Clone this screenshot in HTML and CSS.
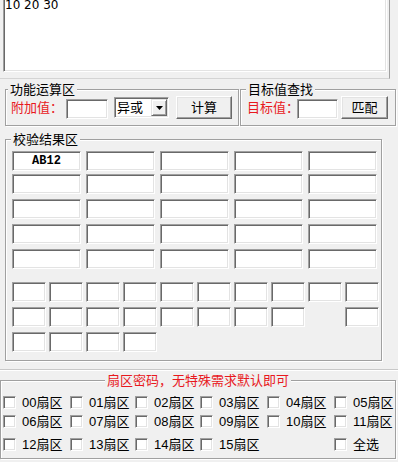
FILE: index.html
```html
<!DOCTYPE html>
<html lang="zh-CN">
<head>
<meta charset="utf-8">
<title>校验工具</title>
<link rel="stylesheet" href="styles.css">
</head>
<body>
<div class="top">
  <div class="memo"><span class="memo-text">10 20 30</span></div>
</div>

<div class="groups">
  <div class="group g1">
    <span class="legend">功能运算区</span>
    <div class="row">
      <span class="lbl lbl1">附加值：</span>
      <span class="edit e1"></span>
      <div class="combo">
        <span class="ctext">异或</span>
        <span class="cbtn"><svg width="7" height="4" viewBox="0 0 7 4"><path d="M0 0H7L3.5 4Z" fill="#000"/></svg></span>
      </div>
      <div class="btn b1">计算</div>
    </div>
  </div>
  <div class="group g2">
    <span class="legend">目标值查找</span>
    <div class="row">
      <span class="lbl lbl2">目标值：</span>
      <span class="edit e2"></span>
      <div class="btn b2">匹配</div>
    </div>
  </div>
</div>

<div class="group results">
  <span class="legend">校验结果区</span>
  <div class="big">
    <div class="edit cell"><span class="ab">AB12</span></div>
    <div class="edit cell"></div><div class="edit cell"></div><div class="edit cell"></div><div class="edit cell"></div>
    <div class="edit cell"></div><div class="edit cell"></div><div class="edit cell"></div><div class="edit cell"></div><div class="edit cell"></div>
    <div class="edit cell"></div><div class="edit cell"></div><div class="edit cell"></div><div class="edit cell"></div><div class="edit cell"></div>
    <div class="edit cell"></div><div class="edit cell"></div><div class="edit cell"></div><div class="edit cell"></div><div class="edit cell"></div>
    <div class="edit cell"></div><div class="edit cell"></div><div class="edit cell"></div><div class="edit cell"></div><div class="edit cell"></div>
  </div>
  <div class="small">
    <div class="edit"></div><div class="edit"></div><div class="edit"></div><div class="edit"></div><div class="edit"></div>
    <div class="edit"></div><div class="edit"></div><div class="edit"></div><div class="edit"></div><div class="edit"></div>
    <div class="edit"></div><div class="edit"></div><div class="edit"></div><div class="edit"></div><div class="edit"></div>
    <div class="edit"></div><div class="edit"></div><div class="edit"></div><div class="spacer"></div><div class="edit"></div>
    <div class="edit"></div><div class="edit"></div><div class="edit"></div><div class="edit"></div>
  </div>
</div>

<div class="sep"></div>

<div class="group sector">
  <span class="legend red center">扇区密码，无特殊需求默认即可</span>
  <div class="chks">
    <label class="chk"><span class="box"></span><span>00扇区</span></label>
    <label class="chk"><span class="box"></span><span>01扇区</span></label>
    <label class="chk"><span class="box"></span><span>02扇区</span></label>
    <label class="chk"><span class="box"></span><span>03扇区</span></label>
    <label class="chk"><span class="box"></span><span>04扇区</span></label>
    <label class="chk"><span class="box"></span><span>05扇区</span></label>
    <label class="chk"><span class="box"></span><span>06扇区</span></label>
    <label class="chk"><span class="box"></span><span>07扇区</span></label>
    <label class="chk"><span class="box"></span><span>08扇区</span></label>
    <label class="chk"><span class="box"></span><span>09扇区</span></label>
    <label class="chk"><span class="box"></span><span>10扇区</span></label>
    <label class="chk"><span class="box"></span><span>11扇区</span></label>
    <label class="chk"><span class="box"></span><span>12扇区</span></label>
    <label class="chk"><span class="box"></span><span>13扇区</span></label>
    <label class="chk"><span class="box"></span><span>14扇区</span></label>
    <label class="chk"><span class="box"></span><span>15扇区</span></label>
    <span class="spacer"></span>
    <label class="chk"><span class="box"></span><span>全选</span></label>
  </div>
</div>
</body>
</html>
```

FILE: styles.css
```css
* { box-sizing: border-box; }
html, body { margin: 0; padding: 0; }
body {
  background: #f0f0f0;
  width: 398px;
  height: 462px;
  overflow: hidden;
  font: 13px/15px "Liberation Sans", "Noto Sans CJK SC", sans-serif;
  color: #000;
}

/* top memo */
.top {
  margin-top: -7px;
  height: 86px;
  width: 390px;
  padding-left: 3px;
  border-right: 1px solid #a0a0a0;
  border-bottom: 1px solid #d4d4d4;
}
.memo {
  width: 384px;
  height: 79px;
  background: #fff;
  border: 1px solid;
  border-color: #a0a0a0 #fff #fff #a0a0a0;
  box-shadow: inset 1px 1px #696969, inset -1px -1px #e3e3e3;
  padding: 6px 0 0 1px;
  font: 12px/11px "DejaVu Sans", sans-serif;
}

/* group boxes */
.group {
  position: relative;
  border: 1px solid #a0a0a0;
  box-shadow: inset 1px 1px #fff, 1px 1px #fff;
}
.legend {
  position: absolute;
  top: -8px;
  left: 5px;
  padding: 0 2px;
  background: #f0f0f0;
  line-height: 15px;
  white-space: nowrap;
}
.legend.center { left: 50%; transform: translateX(-50%); }
.red { color: #e8191e; }

.groups {
  display: flex;
  gap: 1px;
  margin: 10px 0 0 5px;
}
.g1 { width: 234px; padding: 6px 5px; }
.g1 .legend { left: 2px; }
.g2 { width: 156px; padding: 6px 6px; }
.row {
  display: flex;
  align-items: center;
  height: 23px;
}
.lbl { color: #e8191e; white-space: nowrap; }
.lbl1 { width: 52px; margin-right: 3px; }
.lbl2 { width: 50px; }

/* sunken edit */
.edit {
  display: block;
  background: #fff;
  border: 1px solid;
  border-color: #a0a0a0 #fff #fff #a0a0a0;
  box-shadow: inset 1px 1px #696969, inset -1px -1px #e3e3e3;
}
.e1 { width: 42px; height: 20px; align-self: flex-end; margin-right: 6px; }
.e2 { width: 41px; height: 20px; align-self: flex-end; margin-right: 3px; }

.combo {
  width: 55px;
  height: 21px;
  background: #fff;
  border: 1px solid;
  border-color: #a0a0a0 #fff #fff #a0a0a0;
  box-shadow: inset 1px 1px #696969, inset -1px -1px #e3e3e3;
  display: flex;
  align-items: center;
  justify-content: space-between;
  padding: 1px 1px 1px 2px;
  margin-right: 7px;
}
.cbtn {
  width: 16px;
  height: 17px;
  background: #f0f0f0;
  border: 1px solid;
  border-color: #e3e3e3 #696969 #696969 #e3e3e3;
  box-shadow: inset 1px 1px #fff, inset -1px -1px #a0a0a0;
  display: flex;
  align-items: center;
  justify-content: center;
}

/* raised button */
.btn {
  height: 23px;
  background: #f0f0f0;
  border: 1px solid;
  border-color: #fff #696969 #696969 #fff;
  box-shadow: inset -1px -1px #a0a0a0, inset 1px 1px #e3e3e3;
  display: flex;
  align-items: center;
  justify-content: center;
}
.b1 { width: 56px; }
.b2 { width: 47px; }

/* results */
.results {
  margin: 13px 0 0 5px;
  width: 377px;
  height: 222px;
  padding: 11px 0 0 6px;
}
.big {
  display: grid;
  grid-template-columns: repeat(5, 69px);
  column-gap: 5px;
  grid-template-rows: 23px 25px 25px 25px 20px;
}
.cell {
  height: 20px;
  display: flex;
  align-items: center;
  justify-content: center;
}
.ab {
  font: bold 12px/14px "Liberation Mono", monospace;
}
.small {
  display: grid;
  grid-template-columns: repeat(10, 34px);
  column-gap: 3px;
  row-gap: 5px;
  grid-auto-rows: 20px;
  margin-top: 13px;
}

/* sector */
.sep {
  margin-top: 8px;
  border-top: 1px solid #c8c8c8;
  border-bottom: 1px solid #fff;
}
.sector {
  margin-top: 9px;
  width: 396px;
  height: 79px;
  padding: 15px 0 0 2px;
}
.chks {
  display: grid;
  grid-template-columns: 67px 65px 65px 67px 67px 60px;
  grid-template-rows: 19px 23px 13px;
  align-items: start;
}
.chk {
  display: flex;
  align-items: center;
  gap: 6px;
  height: 13px;
  white-space: nowrap;
}
.box {
  flex: none;
  width: 13px;
  height: 13px;
  background: #fff;
  border: 1px solid;
  border-color: #a0a0a0 #fff #fff #a0a0a0;
  box-shadow: inset 1px 1px #696969, inset -1px -1px #e3e3e3;
}
```
